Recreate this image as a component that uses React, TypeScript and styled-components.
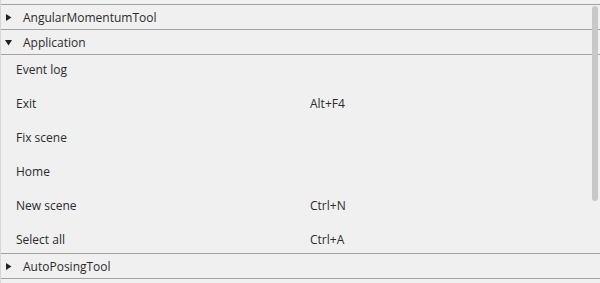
import React from 'react';
import styled, { createGlobalStyle } from 'styled-components';

const GlobalStyle = createGlobalStyle`
  html, body {
    margin: 0;
    padding: 0;
    background: #f0f0f0;
  }
  body {
    font-family: "Open Sans", "Noto Sans", sans-serif;
    font-size: 12px;
    color: #2b2b2b;
  }
`;

const Panel = styled.div`
  position: relative;
  width: 600px;
  height: 283px;
  overflow: hidden;
  background: #f0f0f0;
  padding-top: 4px;
  box-sizing: border-box;
  border-left: 1px solid #d6d6d6;
`;

const Section = styled.div`
  display: flex;
  flex-direction: column;
`;

const Header = styled.div`
  display: flex;
  align-items: center;
  height: 24px;
  border-top: 1px solid #a2a2a2;
  padding-left: 4px;
  gap: 11px;
`;

const Arrow = styled.svg`
  width: 7px;
  height: 7px;
  flex: none;
`;

const Content = styled.div`
  display: flex;
  flex-direction: column;
  border-top: 1px solid #a2a2a2;
  height: 198px;
  overflow: hidden;
`;

const Item = styled.div`
  display: grid;
  grid-template-columns: 294px 1fr;
  align-items: center;
  flex: none;
  height: 34px;
  padding-left: 15px;
  margin-top: -3px;
  margin-bottom: 3px;
`;

const Bottom = styled.div`
  border-top: 1px solid #a2a2a2;
`;

const ScrollThumb = styled.div`
  position: absolute;
  right: 2px;
  top: 6px;
  width: 6px;
  height: 195px;
  border-radius: 3px;
  background: #c8c8c8;
`;

const Triangle: React.FC<{ open?: boolean }> = ({ open }) => (
  <Arrow viewBox="0 0 7 7">
    {open ? (
      <polygon points="0,1 7,1 3.5,6.5" fill="#222" />
    ) : (
      <polygon points="1,0 6.5,3.5 1,7" fill="#222" />
    )}
  </Arrow>
);

const items: [string, string][] = [
  ['Event log', ''],
  ['Exit', 'Alt+F4'],
  ['Fix scene', ''],
  ['Home', ''],
  ['New scene', 'Ctrl+N'],
  ['Select all', 'Ctrl+A'],
];

export default function App() {
  return (
    <>
      <GlobalStyle />
      <Panel>
        <Section>
          <Header>
            <Triangle />
            <span>AngularMomentumTool</span>
          </Header>
        </Section>
        <Section>
          <Header>
            <Triangle open />
            <span>Application</span>
          </Header>
          <Content>
            {items.map(([label, key]) => (
              <Item key={label}>
                <span>{label}</span>
                <span>{key}</span>
              </Item>
            ))}
          </Content>
        </Section>
        <Section>
          <Header>
            <Triangle />
            <span>AutoPosingTool</span>
          </Header>
        </Section>
        <Bottom />
        <ScrollThumb />
      </Panel>
    </>
  );
}
